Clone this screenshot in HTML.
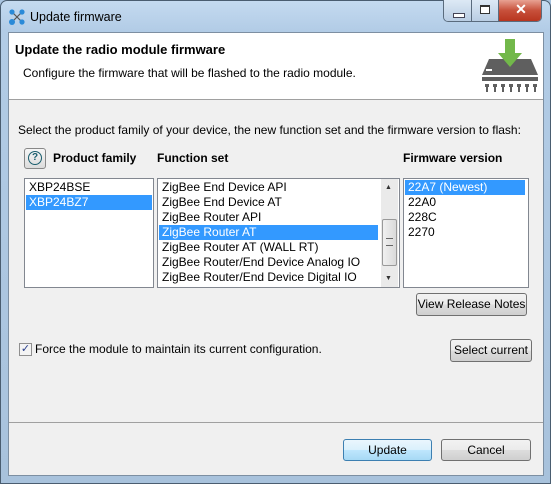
<!DOCTYPE html><html><head><style>
body{margin:0;width:551px;height:484px;overflow:hidden;background:#a9c4e0;font-family:"Liberation Sans",sans-serif;font-size:12px;color:#000;position:relative}
.a{position:absolute}
.frame{left:0;top:0;width:549px;height:482px;border:1px solid #4a5d70;border-radius:7px 7px 0 0;background:linear-gradient(180deg,#c4daf0 0,#b2cce6 30px,#a8c2dc 100%)}
.client{left:8px;top:32px;width:534px;height:442px;background:#f0f0f0;border:1px solid #7d8fa2}
.lst{background:#fff;border:1px solid #828790;overflow:hidden}
.row{height:15px;line-height:15px;padding-left:3px;white-space:nowrap}
.sel{background:#3399ff;color:#fff}
.btn{border:1px solid #707070;border-radius:3px;background:linear-gradient(#f2f2f2,#ebebeb 50%,#dddddd 51%,#cfcfcf);text-align:center;box-sizing:border-box}
</style></head><body>
<div class="a frame"></div>
<svg class="a" style="left:8px;top:8px" width="18" height="18" viewBox="0 0 18 18"><g stroke="#555" stroke-width="1.2"><line x1="4" y1="4" x2="14" y2="14"/><line x1="14" y1="4" x2="4" y2="14"/></g><circle cx="4" cy="4" r="2.6" fill="#2a8ad8"/><circle cx="14" cy="4" r="2.6" fill="#2a8ad8"/><circle cx="4" cy="14" r="3" fill="#2a8ad8"/><circle cx="14" cy="14" r="2.6" fill="#2a8ad8"/></svg>
<div class="a" style="left:30px;top:10px;font-size:12.5px">Update firmware</div>
<div class="a" style="left:443px;top:0;width:99px;height:22px;border:1px solid #5a6b7d;border-top:none;border-radius:0 0 5px 5px;overflow:hidden;box-sizing:border-box">
<div class="a" style="left:0;top:0;width:27px;height:21px;background:linear-gradient(#dde9f5,#b9cde3);border-right:1px solid #5a6b7d"></div>
<div class="a" style="left:9px;top:13px;width:10px;height:3px;background:#fff;border:1px solid #445"></div>
<div class="a" style="left:28px;top:0;width:26px;height:21px;background:linear-gradient(#dde9f5,#b9cde3);border-right:1px solid #5a6b7d"></div>
<div class="a" style="left:36px;top:5px;width:8px;height:6px;border:1px solid #333;border-top-width:2px;background:#fff"></div>
<div class="a" style="left:55px;top:0;width:44px;height:21px;background:linear-gradient(#e8a293,#c7503b 50%,#b8351f)"></div>
<div class="a" style="left:55px;top:1px;width:44px;text-align:center;color:#fff;font-weight:bold;font-size:14px">✕</div>
</div>
<div class="a client"></div>
<div class="a" style="left:9px;top:33px;width:534px;height:66px;background:#fff;border-bottom:1px solid #a0a0a0"></div>
<div class="a" style="left:15px;top:42px;font-weight:bold;font-size:13px">Update the radio module firmware</div>
<div class="a" style="left:23px;top:66px">Configure the firmware that will be flashed to the radio module.</div>
<svg class="a" style="left:481px;top:39px" width="58" height="58" viewBox="0 0 58 58"><path d="M8 20 L50 20 L57 36 L1 36 Z" fill="#5f5f5f"/><path d="M21 14 L37 14 L29 27 Z" fill="#fff"/><rect x="24" y="0" width="10" height="16" fill="#72b84a"/><path d="M17 14 L41 14 L29 28 Z" fill="#72b84a"/><rect x="5" y="30" width="6" height="2" fill="#fff"/><rect x="1" y="38" width="56" height="4" fill="#5f5f5f"/><g fill="#5f5f5f"><rect x="4" y="45" width="4" height="3"/><rect x="12" y="45" width="4" height="3"/><rect x="20" y="45" width="4" height="3"/><rect x="28" y="45" width="4" height="3"/><rect x="36" y="45" width="4" height="3"/><rect x="44" y="45" width="4" height="3"/><rect x="52" y="45" width="4" height="3"/><rect x="5" y="48" width="2" height="5"/><rect x="13" y="48" width="2" height="5"/><rect x="21" y="48" width="2" height="5"/><rect x="29" y="48" width="2" height="5"/><rect x="37" y="48" width="2" height="5"/><rect x="45" y="48" width="2" height="5"/><rect x="53" y="48" width="2" height="5"/></g></svg>
<div class="a" style="left:18px;top:123px">Select the product family of your device, the new function set and the firmware version to flash:</div>
<div class="a" style="left:24px;top:148px;width:22px;height:21px;border:1px solid #888;border-radius:3px;background:linear-gradient(#f6f6f6,#dcdcdc);box-sizing:border-box"></div>
<div class="a" style="left:28px;top:151px;width:14px;height:14px;border:1.5px solid #1a5e6e;border-radius:50%;box-sizing:border-box;text-align:center;font-weight:bold;font-size:10px;line-height:12px;color:#1a5e6e">?</div>
<div class="a" style="left:53px;top:151px;font-weight:bold">Product family</div>
<div class="a" style="left:157px;top:151px;font-weight:bold">Function set</div>
<div class="a" style="left:403px;top:151px;font-weight:bold">Firmware version</div>
<div class="a lst" style="left:24px;top:178px;width:126px;height:106px;padding:1px">
<div class="row">XBP24BSE</div><div class="row sel">XBP24BZ7</div></div>
<div class="a lst" style="left:157px;top:178px;width:239px;height:106px;padding:1px">
<div class="row" style="width:218px">ZigBee End Device API</div><div class="row">ZigBee End Device AT</div><div class="row">ZigBee Router API</div><div class="row sel" style="width:216px">ZigBee Router AT</div><div class="row">ZigBee Router AT (WALL RT)</div><div class="row">ZigBee Router/End Device Analog IO</div><div class="row">ZigBee Router/End Device Digital IO</div>
<div class="a" style="left:223px;top:0;width:17px;height:108px;background:#eaeaea"></div>
<div class="a" style="left:227px;top:5px;font-size:7px;color:#333">▲</div>
<div class="a" style="left:227px;top:96px;font-size:7px;color:#333">▼</div>
<div class="a" style="left:224px;top:40px;width:15px;height:47px;border:1px solid #999;border-radius:2px;background:linear-gradient(90deg,#f0f0f0,#dadada);box-sizing:border-box"></div>
<div class="a" style="left:228px;top:59px;width:7px;height:6px;border-top:1px solid #666;border-bottom:1px solid #666"></div>
</div>
<div class="a lst" style="left:403px;top:178px;width:122px;height:106px;padding:1px">
<div class="row sel" style="width:117px">22A7 (Newest)</div><div class="row">22A0</div><div class="row">228C</div><div class="row">2270</div></div>
<div class="a btn" style="left:416px;top:293px;width:111px;height:23px;line-height:21px">View Release Notes</div>
<div class="a" style="left:19px;top:343px;width:13px;height:13px;border:1px solid #8f8f8f;background:#f4f4f4;box-sizing:border-box;font-size:11px;line-height:11px;text-align:center;color:#2a3f8c">✓</div>
<div class="a" style="left:35px;top:342px">Force the module to maintain its current configuration.</div>
<div class="a btn" style="left:450px;top:339px;width:82px;height:23px;line-height:21px">Select current</div>
<div class="a" style="left:9px;top:422px;width:534px;border-top:1px solid #a0a0a0"></div>
<div class="a btn" style="left:343px;top:439px;width:89px;height:22px;line-height:20px;border-color:#3c7fb1;background:linear-gradient(#eaf6fd,#d9f0fc 50%,#bee6fd 51%,#a7d9f5)">Update</div>
<div class="a btn" style="left:441px;top:439px;width:90px;height:22px;line-height:20px">Cancel</div>
</body></html>
